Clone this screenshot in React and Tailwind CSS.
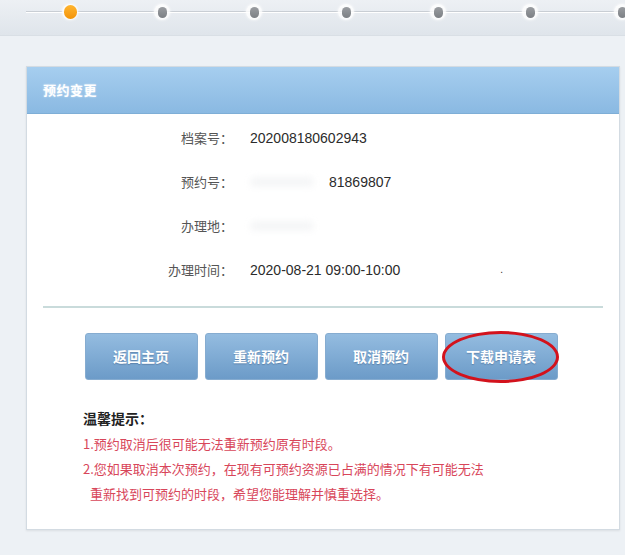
import React from "react";

const steps = [true, false, false, false, false, false, false];

const rows = [
  { label: "档案号：", value: "202008180602943" },
  { label: "预约号：", value: "81869807", blurred: true },
  { label: "办理地：", value: "", blurred: true },
  { label: "办理时间：", value: "2020-08-21 09:00-10:00", dot: true },
];

const buttons = ["返回主页", "重新预约", "取消预约", "下载申请表"];

const cjk = { fontFamily: '"Noto Sans CJK SC", "Liberation Sans", sans-serif' };

function Stepper() {
  return (
    <div className="relative h-[36px] bg-gradient-to-b from-[#edf0f4] to-[#dfe5eb] border-b border-[#d9dfe5]">
      {/* track line */}
      <div className="absolute left-[26px] right-0 top-[11px] h-[2px] bg-[#c9ced4] border-b border-white" />
      <div className="relative flex items-center gap-[76px] pl-[62px] pt-[4px]">
        {steps.map((active, i) => (
          <div
            key={i}
            className="w-[16px] h-[16px] rounded-full bg-white/80 shadow-[0_0_3px_rgba(255,255,255,0.9)] flex items-center justify-center shrink-0"
          >
            {active ? (
              <span className="w-[13px] h-[14px] rounded-full bg-gradient-to-b from-[#ffb52e] to-[#f39404]" />
            ) : (
              <span className="w-[9px] h-[11px] rounded-full bg-gradient-to-b from-[#9a9da1] to-[#7c8085]" />
            )}
          </div>
        ))}
      </div>
    </div>
  );
}

export default function App() {
  return (
    <div className="w-[625px] h-[555px] bg-[#edf1f5] overflow-hidden" style={cjk}>
      <Stepper />

      <div className="pl-[26px] pr-[5px] pt-[30px]">
        <div className="bg-white border border-[#d3dbe2] shadow-[0_1px_2px_rgba(0,0,0,0.08)]">
          {/* header */}
          <div className="h-[47px] bg-gradient-to-b from-[#a6ceef] to-[#8ab9e2] border-b border-[#7eaed6] flex items-center pl-[16px]">
            <span className="text-white text-[13px] font-bold tracking-[0.5px] [text-shadow:0_0_2px_rgba(255,255,255,0.6)]">
              预约变更
            </span>
          </div>

          {/* info rows */}
          <div className="pt-[2px]">
            {rows.map((r) => (
              <div key={r.label} className="h-[44px] flex items-center">
                <div className="w-[206px] text-right text-[13px] text-[#555]">{r.label}</div>
                <div className="relative pl-[17px] flex items-center text-[14px] text-[#2b2b2b]" style={{ fontFamily: '"Liberation Sans", Arial, sans-serif' }}>
                  {r.blurred && (
                    <span className="w-[64px] h-[10px] mr-[15px] rounded-full bg-[#f5f6f7] blur-[3px]" />
                  )}
                  <span>{r.value}</span>
                  {r.dot && <span className="ml-[100px] text-[10px] leading-none">.</span>}
                </div>
              </div>
            ))}
          </div>

          <div className="mx-[16px] mt-[14px] border-t-[2px] border-[#c9dbdb]" />

          {/* buttons */}
          <div className="flex justify-center gap-[7px] mt-[25px] pr-[4px]">
            {buttons.map((b, i) => (
              <div key={b} className="relative">
                <button className="w-[113px] h-[47px] rounded-[3px] border border-[#86acd0] bg-gradient-to-b from-[#94bce0] to-[#6c9bc8] text-white text-[14px] font-bold [text-shadow:0_1px_1px_rgba(40,70,110,0.35)]">
                  {b}
                </button>
                {i === 3 && (
                  <div className="absolute -left-[3px] -right-[1px] -top-[2px] -bottom-[3px] rounded-[50%] border-[3px] border-[#d3121c] pointer-events-none" />
                )}
              </div>
            ))}
          </div>

          {/* tips */}
          <div className="pl-[56px] pt-[26px] pb-[23px] text-[13px] leading-[25px]">
            <div className="font-bold text-[#222] text-[14px]">温馨提示：</div>
            <div className="text-[#d8465a]">1.预约取消后很可能无法重新预约原有时段。</div>
            <div className="text-[#d8465a]">2.您如果取消本次预约，在现有可预约资源已占满的情况下有可能无法</div>
            <div className="text-[#d8465a] pl-[7px]">重新找到可预约的时段，希望您能理解并慎重选择。</div>
          </div>
        </div>
      </div>
    </div>
  );
}
